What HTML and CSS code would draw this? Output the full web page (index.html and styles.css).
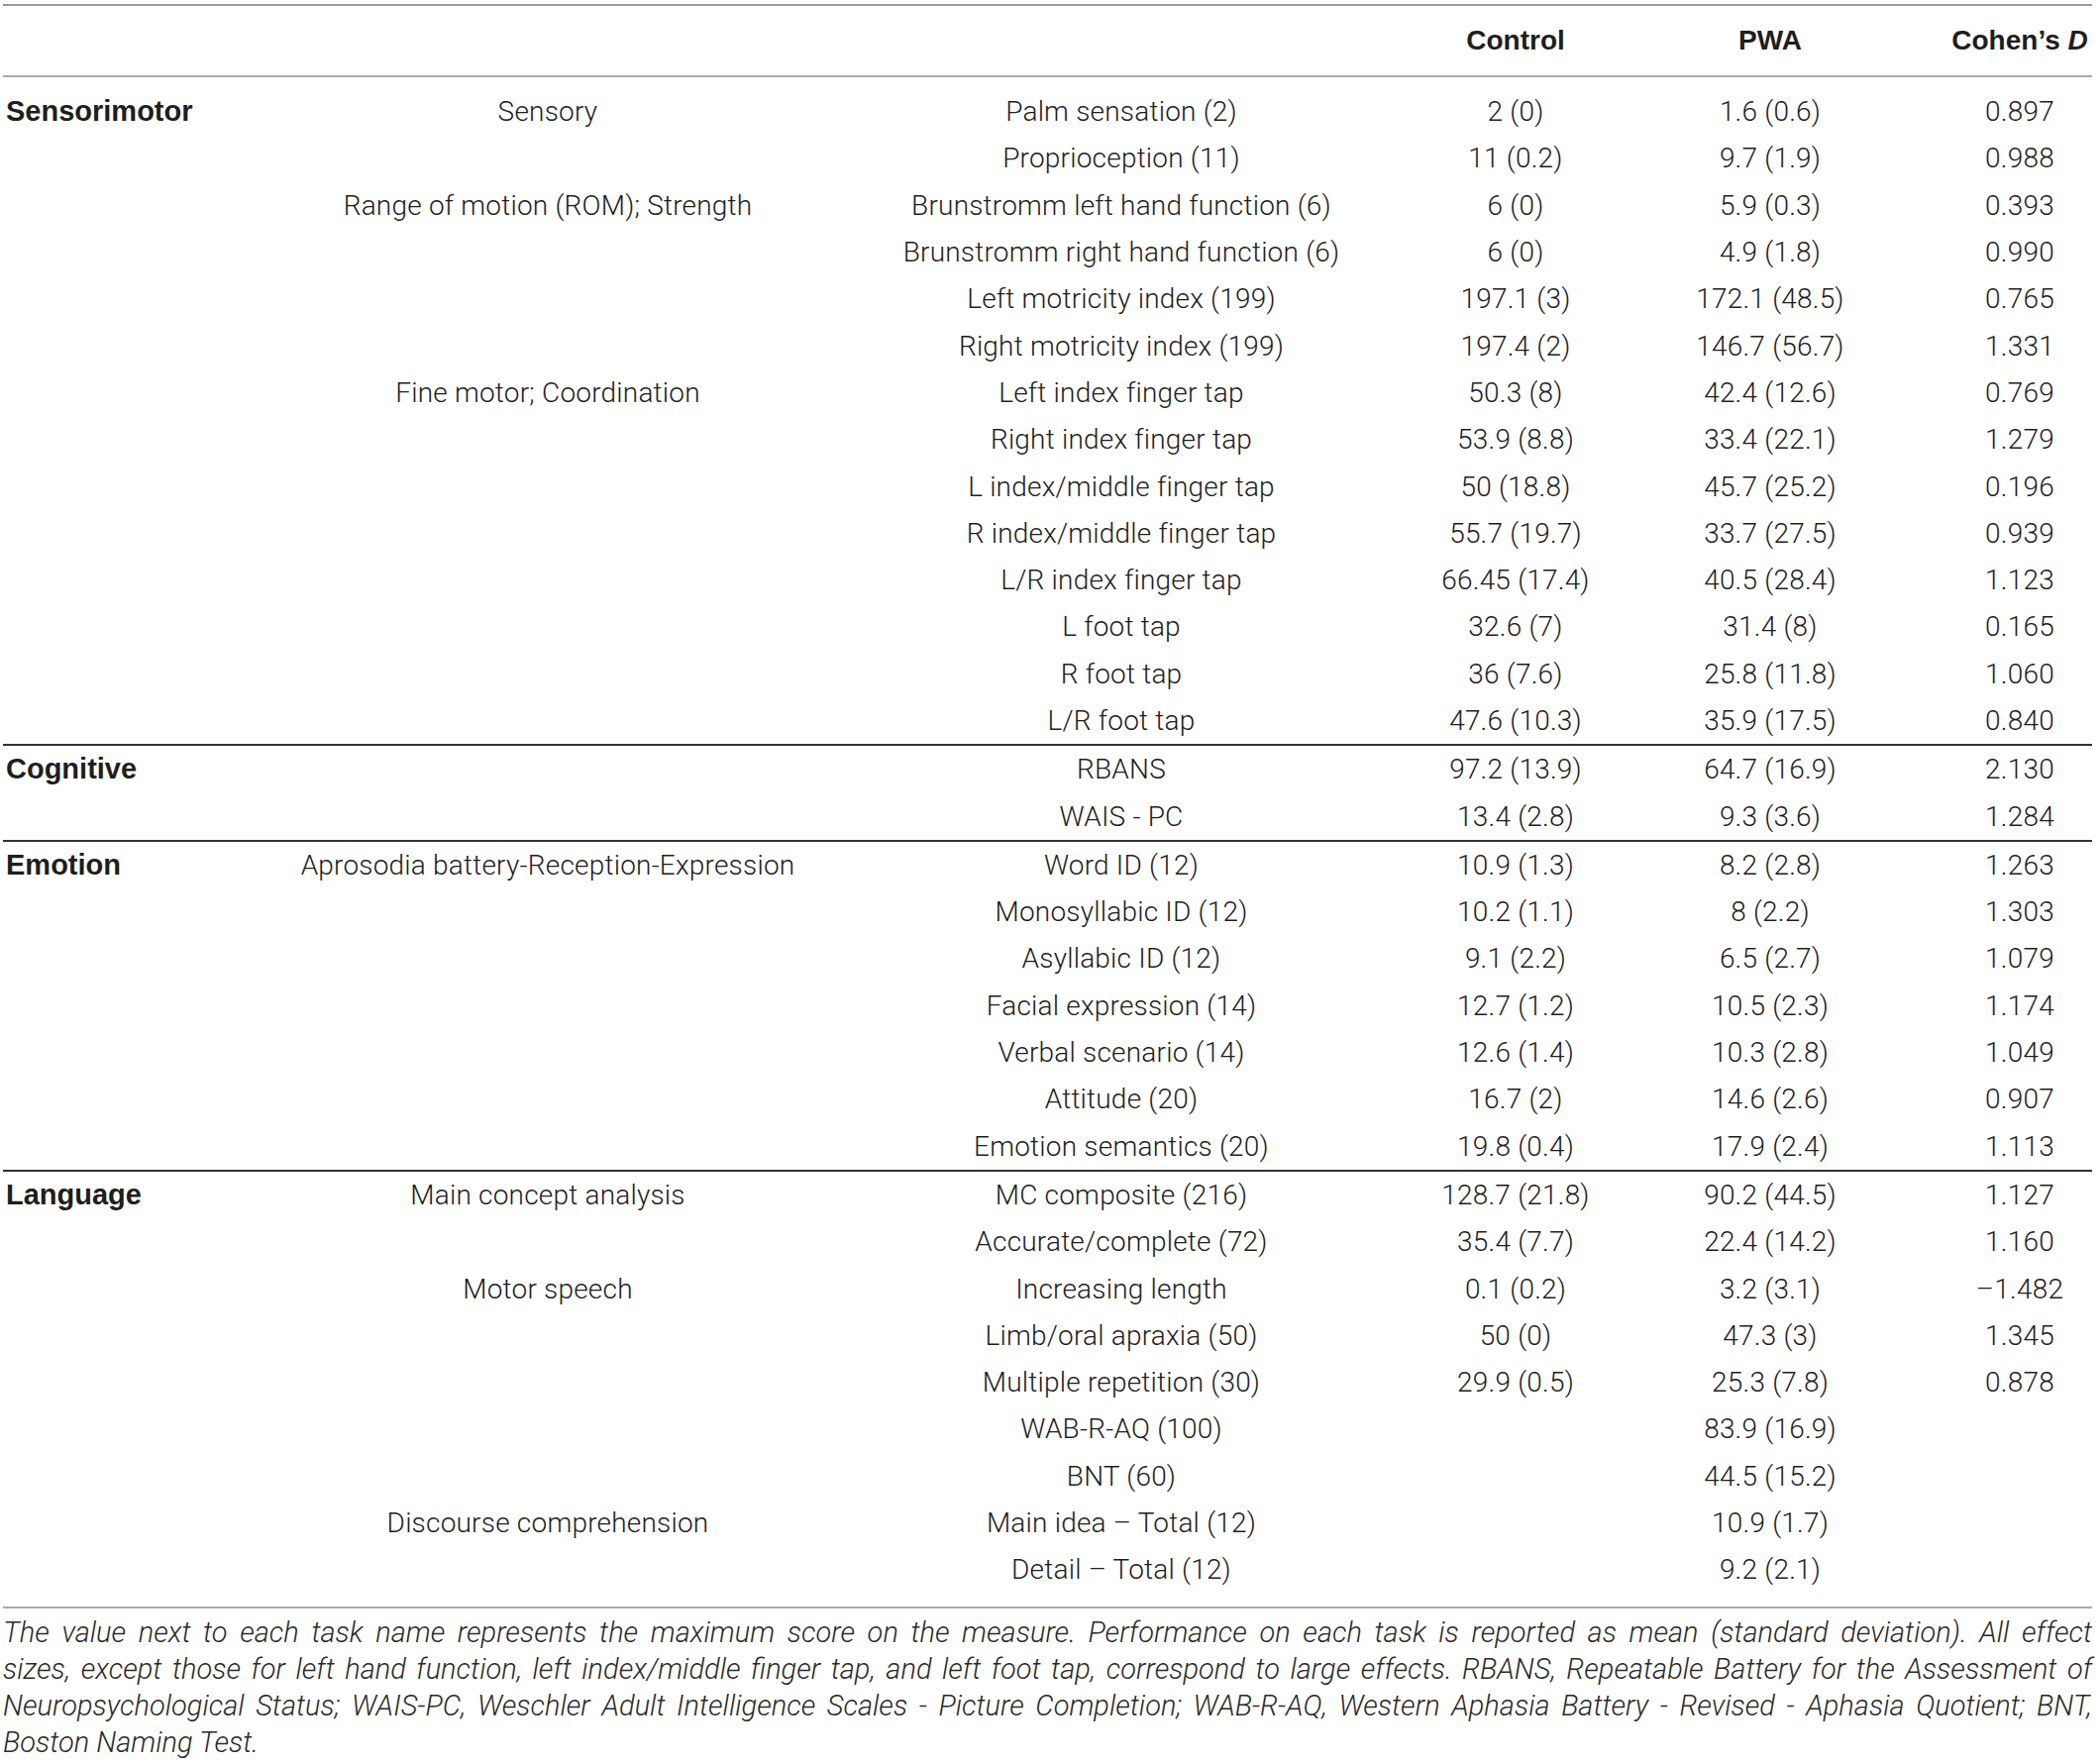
FILE: index.html
```html
<!DOCTYPE html>
<html lang="en">
<head>
<meta charset="UTF-8">
<title>Table</title>
<link rel="stylesheet" href="styles.css">
</head>
<body>

<div class="wrap">
<table class="scores">
  <colgroup>
    <col class="c-cat"><col class="c-sub"><col class="c-task"><col class="c-ctl"><col class="c-pwa"><col class="c-d">
  </colgroup>
  <thead>
    <tr>
      <th></th><th></th><th></th>
      <th>Control</th>
      <th>PWA</th>
      <th>Cohen’s <i>D</i></th>
    </tr>
  </thead>
  <tbody>
    <tr class="first">
      <td class="cat">Sensorimotor</td><td>Sensory</td><td>Palm sensation (2)</td><td>2 (0)</td><td>1.6 (0.6)</td><td>0.897</td>
    </tr>
    <tr><td></td><td></td><td>Proprioception (11)</td><td>11 (0.2)</td><td>9.7 (1.9)</td><td>0.988</td></tr>
    <tr><td></td><td>Range of motion (ROM); Strength</td><td>Brunstromm left hand function (6)</td><td>6 (0)</td><td>5.9 (0.3)</td><td>0.393</td></tr>
    <tr><td></td><td></td><td>Brunstromm right hand function (6)</td><td>6 (0)</td><td>4.9 (1.8)</td><td>0.990</td></tr>
    <tr><td></td><td></td><td>Left motricity index (199)</td><td>197.1 (3)</td><td>172.1 (48.5)</td><td>0.765</td></tr>
    <tr><td></td><td></td><td>Right motricity index (199)</td><td>197.4 (2)</td><td>146.7 (56.7)</td><td>1.331</td></tr>
    <tr><td></td><td>Fine motor; Coordination</td><td>Left index finger tap</td><td>50.3 (8)</td><td>42.4 (12.6)</td><td>0.769</td></tr>
    <tr><td></td><td></td><td>Right index finger tap</td><td>53.9 (8.8)</td><td>33.4 (22.1)</td><td>1.279</td></tr>
    <tr><td></td><td></td><td>L index/middle finger tap</td><td>50 (18.8)</td><td>45.7 (25.2)</td><td>0.196</td></tr>
    <tr><td></td><td></td><td>R index/middle finger tap</td><td>55.7 (19.7)</td><td>33.7 (27.5)</td><td>0.939</td></tr>
    <tr><td></td><td></td><td>L/R index finger tap</td><td>66.45 (17.4)</td><td>40.5 (28.4)</td><td>1.123</td></tr>
    <tr><td></td><td></td><td>L foot tap</td><td>32.6 (7)</td><td>31.4 (8)</td><td>0.165</td></tr>
    <tr><td></td><td></td><td>R foot tap</td><td>36 (7.6)</td><td>25.8 (11.8)</td><td>1.060</td></tr>
    <tr><td></td><td></td><td>L/R foot tap</td><td>47.6 (10.3)</td><td>35.9 (17.5)</td><td>0.840</td></tr>

    <tr class="section">
      <td class="cat">Cognitive</td><td></td><td>RBANS</td><td>97.2 (13.9)</td><td>64.7 (16.9)</td><td>2.130</td>
    </tr>
    <tr><td></td><td></td><td>WAIS - PC</td><td>13.4 (2.8)</td><td>9.3 (3.6)</td><td>1.284</td></tr>

    <tr class="section">
      <td class="cat">Emotion</td><td>Aprosodia battery-Reception-Expression</td><td>Word ID (12)</td><td>10.9 (1.3)</td><td>8.2 (2.8)</td><td>1.263</td>
    </tr>
    <tr><td></td><td></td><td>Monosyllabic ID (12)</td><td>10.2 (1.1)</td><td>8 (2.2)</td><td>1.303</td></tr>
    <tr><td></td><td></td><td>Asyllabic ID (12)</td><td>9.1 (2.2)</td><td>6.5 (2.7)</td><td>1.079</td></tr>
    <tr><td></td><td></td><td>Facial expression (14)</td><td>12.7 (1.2)</td><td>10.5 (2.3)</td><td>1.174</td></tr>
    <tr><td></td><td></td><td>Verbal scenario (14)</td><td>12.6 (1.4)</td><td>10.3 (2.8)</td><td>1.049</td></tr>
    <tr><td></td><td></td><td>Attitude (20)</td><td>16.7 (2)</td><td>14.6 (2.6)</td><td>0.907</td></tr>
    <tr><td></td><td></td><td>Emotion semantics (20)</td><td>19.8 (0.4)</td><td>17.9 (2.4)</td><td>1.113</td></tr>

    <tr class="section">
      <td class="cat">Language</td><td>Main concept analysis</td><td>MC composite (216)</td><td>128.7 (21.8)</td><td>90.2 (44.5)</td><td>1.127</td>
    </tr>
    <tr><td></td><td></td><td>Accurate/complete (72)</td><td>35.4 (7.7)</td><td>22.4 (14.2)</td><td>1.160</td></tr>
    <tr><td></td><td>Motor speech</td><td>Increasing length</td><td>0.1 (0.2)</td><td>3.2 (3.1)</td><td>–1.482</td></tr>
    <tr><td></td><td></td><td>Limb/oral apraxia (50)</td><td>50 (0)</td><td>47.3 (3)</td><td>1.345</td></tr>
    <tr><td></td><td></td><td>Multiple repetition (30)</td><td>29.9 (0.5)</td><td>25.3 (7.8)</td><td>0.878</td></tr>
    <tr><td></td><td></td><td>WAB-R-AQ (100)</td><td></td><td>83.9 (16.9)</td><td></td></tr>
    <tr><td></td><td></td><td>BNT (60)</td><td></td><td>44.5 (15.2)</td><td></td></tr>
    <tr><td></td><td>Discourse comprehension</td><td>Main idea – Total (12)</td><td></td><td>10.9 (1.7)</td><td></td></tr>
    <tr class="last"><td></td><td></td><td>Detail – Total (12)</td><td></td><td>9.2 (2.1)</td><td></td></tr>
  </tbody>
</table>

<p class="note">
  <span class="line">The value next to each task name represents the maximum score on the measure. Performance on each task is reported as mean (standard deviation). All effect</span>
  <span class="line">sizes, except those for left hand function, left index/middle finger tap, and left foot tap, correspond to large effects. RBANS, Repeatable Battery for the Assessment of</span>
  <span class="line">Neuropsychological Status; WAIS-PC, Weschler Adult Intelligence Scales - Picture Completion; WAB-R-AQ, Western Aphasia Battery - Revised - Aphasia Quotient; BNT,</span>
  <span class="line end">Boston Naming Test.</span>
</p>
</div>

</body>
</html>
```

FILE: styles.css
```css
body {
  margin: 0;
  padding: 4px 8px 0 3px;
  background-color: #fff;
  color: #1e1e1e;
  font-family: Roboto, "Liberation Sans", Arial, sans-serif;
  font-weight: 300;
}
.wrap {
  width: 2109px;
}
.scores {
  width: 2109px;
  border-collapse: collapse;
  table-layout: fixed;
  font-size: 28px;
  letter-spacing: 0.2px;
}
.c-cat { width: 291px; }
.c-sub { width: 518px; }
.c-task { width: 640px; }
.c-ctl { width: 156px; }
.c-pwa { width: 358px; }
.c-d { width: 146px; }

.scores th {
  height: 70px;
  padding: 0;
  font-family: "Liberation Sans", Arial, sans-serif;
  font-weight: bold;
  font-size: 28px;
  letter-spacing: 0;
  color: #1e1e1e;
  text-align: center;
  vertical-align: middle;
  border-top: 2px solid #9a9a9a;
  border-bottom: 2px solid #aaa;
  white-space: nowrap;
}
.scores td {
  height: 47.3px;
  padding: 0;
  text-align: center;
  vertical-align: middle;
  white-space: nowrap;
}
.scores td.cat {
  text-align: left;
  padding-left: 3px;
  font-family: "Liberation Sans", Arial, sans-serif;
  font-weight: bold;
  font-size: 29px;
  letter-spacing: 0;
  color: #1e1e1e;
}
.scores tr.first td {
  padding-top: 11px;
}
.scores tr.section td {
  border-top: 2px solid #333;
}
.scores tr.last td {
  padding-bottom: 13px;
  border-bottom: 2px solid #aaa;
}
.note {
  margin: 6px 0 0;
  font-size: 29px;
  line-height: 37px;
  font-style: italic;
  color: #2a2a2a;
}
.note .line {
  display: block;
  text-align: justify;
  text-align-last: justify;
}
.note .line.end {
  text-align-last: left;
}
```
